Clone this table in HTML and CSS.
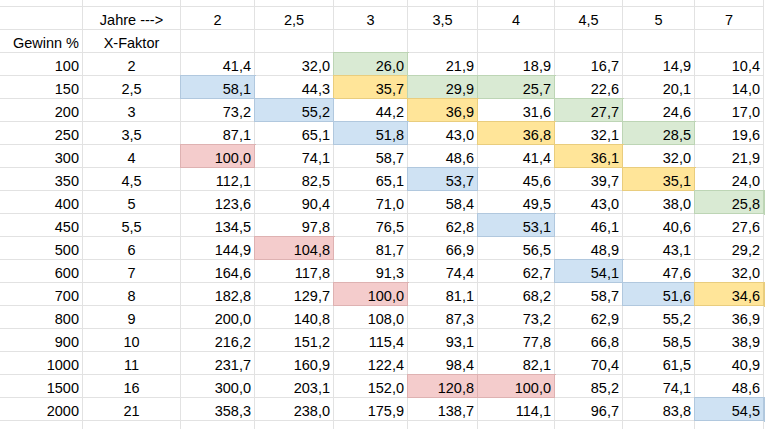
FILE: index.html
```html
<!DOCTYPE html>
<html lang="de">
<head>
<meta charset="utf-8">
<title>Gewinn / X-Faktor</title>
<link rel="stylesheet" href="styles.css">
</head>
<body>
<div class="sheet">
  <div class="row top"><div class="c"></div><div class="c"></div><div class="c"></div><div class="c"></div><div class="c"></div><div class="c"></div><div class="c"></div><div class="c"></div><div class="c"></div><div class="c"></div></div>
  <div class="row"><div class="c"></div><div class="c ctr">Jahre ---&gt;</div><div class="c ctr">2</div><div class="c ctr">2,5</div><div class="c ctr">3</div><div class="c ctr">3,5</div><div class="c ctr">4</div><div class="c ctr">4,5</div><div class="c ctr">5</div><div class="c ctr">7</div></div>
  <div class="row"><div class="c num">Gewinn %</div><div class="c ctr">X-Faktor</div><div class="c"></div><div class="c"></div><div class="c"></div><div class="c"></div><div class="c"></div><div class="c"></div><div class="c"></div><div class="c"></div></div>
  <div class="row"><div class="c num">100</div><div class="c ctr">2</div><div class="c num">41,4</div><div class="c num">32,0</div><div class="c num green">26,0</div><div class="c num">21,9</div><div class="c num">18,9</div><div class="c num">16,7</div><div class="c num">14,9</div><div class="c num">10,4</div></div>
  <div class="row"><div class="c num">150</div><div class="c ctr">2,5</div><div class="c num blue">58,1</div><div class="c num">44,3</div><div class="c num yellow">35,7</div><div class="c num green">29,9</div><div class="c num green">25,7</div><div class="c num">22,6</div><div class="c num">20,1</div><div class="c num">14,0</div></div>
  <div class="row"><div class="c num">200</div><div class="c ctr">3</div><div class="c num">73,2</div><div class="c num blue">55,2</div><div class="c num">44,2</div><div class="c num yellow">36,9</div><div class="c num">31,6</div><div class="c num green">27,7</div><div class="c num">24,6</div><div class="c num">17,0</div></div>
  <div class="row"><div class="c num">250</div><div class="c ctr">3,5</div><div class="c num">87,1</div><div class="c num">65,1</div><div class="c num blue">51,8</div><div class="c num">43,0</div><div class="c num yellow">36,8</div><div class="c num">32,1</div><div class="c num green">28,5</div><div class="c num">19,6</div></div>
  <div class="row"><div class="c num">300</div><div class="c ctr">4</div><div class="c num red">100,0</div><div class="c num">74,1</div><div class="c num">58,7</div><div class="c num">48,6</div><div class="c num">41,4</div><div class="c num yellow">36,1</div><div class="c num">32,0</div><div class="c num">21,9</div></div>
  <div class="row"><div class="c num">350</div><div class="c ctr">4,5</div><div class="c num">112,1</div><div class="c num">82,5</div><div class="c num">65,1</div><div class="c num blue">53,7</div><div class="c num">45,6</div><div class="c num">39,7</div><div class="c num yellow">35,1</div><div class="c num">24,0</div></div>
  <div class="row"><div class="c num">400</div><div class="c ctr">5</div><div class="c num">123,6</div><div class="c num">90,4</div><div class="c num">71,0</div><div class="c num">58,4</div><div class="c num">49,5</div><div class="c num">43,0</div><div class="c num">38,0</div><div class="c num green">25,8</div></div>
  <div class="row"><div class="c num">450</div><div class="c ctr">5,5</div><div class="c num">134,5</div><div class="c num">97,8</div><div class="c num">76,5</div><div class="c num">62,8</div><div class="c num blue">53,1</div><div class="c num">46,1</div><div class="c num">40,6</div><div class="c num">27,6</div></div>
  <div class="row"><div class="c num">500</div><div class="c ctr">6</div><div class="c num">144,9</div><div class="c num red">104,8</div><div class="c num">81,7</div><div class="c num">66,9</div><div class="c num">56,5</div><div class="c num">48,9</div><div class="c num">43,1</div><div class="c num">29,2</div></div>
  <div class="row"><div class="c num">600</div><div class="c ctr">7</div><div class="c num">164,6</div><div class="c num">117,8</div><div class="c num">91,3</div><div class="c num">74,4</div><div class="c num">62,7</div><div class="c num blue">54,1</div><div class="c num">47,6</div><div class="c num">32,0</div></div>
  <div class="row"><div class="c num">700</div><div class="c ctr">8</div><div class="c num">182,8</div><div class="c num">129,7</div><div class="c num red">100,0</div><div class="c num">81,1</div><div class="c num">68,2</div><div class="c num">58,7</div><div class="c num blue">51,6</div><div class="c num yellow">34,6</div></div>
  <div class="row"><div class="c num">800</div><div class="c ctr">9</div><div class="c num">200,0</div><div class="c num">140,8</div><div class="c num">108,0</div><div class="c num">87,3</div><div class="c num">73,2</div><div class="c num">62,9</div><div class="c num">55,2</div><div class="c num">36,9</div></div>
  <div class="row"><div class="c num">900</div><div class="c ctr">10</div><div class="c num">216,2</div><div class="c num">151,2</div><div class="c num">115,4</div><div class="c num">93,1</div><div class="c num">77,8</div><div class="c num">66,8</div><div class="c num">58,5</div><div class="c num">38,9</div></div>
  <div class="row"><div class="c num">1000</div><div class="c ctr">11</div><div class="c num">231,7</div><div class="c num">160,9</div><div class="c num">122,4</div><div class="c num">98,4</div><div class="c num">82,1</div><div class="c num">70,4</div><div class="c num">61,5</div><div class="c num">40,9</div></div>
  <div class="row"><div class="c num">1500</div><div class="c ctr">16</div><div class="c num">300,0</div><div class="c num">203,1</div><div class="c num">152,0</div><div class="c num red">120,8</div><div class="c num red">100,0</div><div class="c num">85,2</div><div class="c num">74,1</div><div class="c num">48,6</div></div>
  <div class="row"><div class="c num">2000</div><div class="c ctr">21</div><div class="c num">358,3</div><div class="c num">238,0</div><div class="c num">175,9</div><div class="c num">138,7</div><div class="c num">114,1</div><div class="c num">96,7</div><div class="c num">83,8</div><div class="c num blue">54,5</div></div>
  <div class="row bottom"><div class="c"></div><div class="c"></div><div class="c"></div><div class="c"></div><div class="c"></div><div class="c"></div><div class="c"></div><div class="c"></div><div class="c"></div><div class="c"></div></div>
</div>
</body>
</html>
```
FILE: styles.css
```css
html, body {
  margin: 0;
  padding: 0;
  background: #ffffff;
}

.sheet {
  width: 765px;
  height: 429px;
  overflow: hidden;
  font-family: "Liberation Sans", Arial, sans-serif;
  font-size: 14.5px;
  color: #000000;
}

.row {
  display: grid;
  grid-template-columns: 83px 98px 74px 79px 74px 70px 77px 68px 72px 69px;
  height: 23px;
}

.row.top {
  height: 7px;
}

.row.bottom {
  height: 8px;
}

.c {
  box-sizing: border-box;
  height: 100%;
  background: #ffffff;
  border-right: 1px solid #e2e2e2;
  border-bottom: 1px solid #e2e2e2;
  padding: 5px 3px 1px 3px;
  line-height: 16px;
  white-space: nowrap;
  overflow: visible;
}

.row.top .c,
.row.bottom .c {
  padding: 0;
}

.row.bottom .c {
  border-bottom: none;
}

.num {
  text-align: right;
}

.ctr {
  text-align: center;
}

.blue {
  background: #cfe2f3;
  border-right-color: #b1c8de;
  border-bottom-color: #b1c8de;
  box-shadow: 0 0 0 1px #b1c8de;
}

.green {
  background: #d9ead3;
  border-right-color: #bdd5b5;
  border-bottom-color: #bdd5b5;
  box-shadow: 0 0 0 1px #bdd5b5;
}

.yellow {
  background: #ffe599;
  border-right-color: #e9cd7e;
  border-bottom-color: #e9cd7e;
  box-shadow: 0 0 0 1px #e9cd7e;
}

.red {
  background: #f4cccc;
  border-right-color: #deb2b2;
  border-bottom-color: #deb2b2;
  box-shadow: 0 0 0 1px #deb2b2;
}
```
